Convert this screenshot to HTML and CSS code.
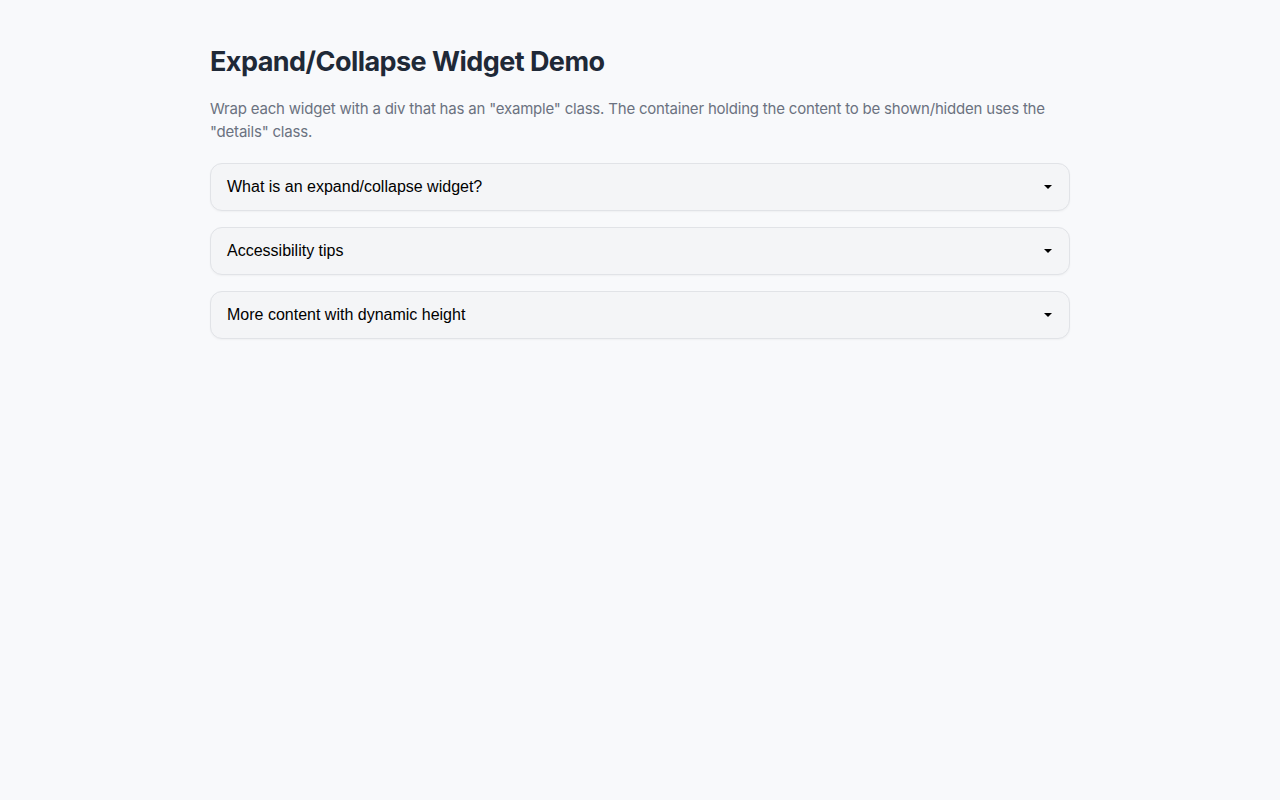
FILE: index.html
```html
<!DOCTYPE html>
<html lang="en">
<head>
  <meta charset="UTF-8" />
  <meta name="viewport" content="width=device-width, initial-scale=1.0"/>
  <title>Expand/Collapse Widget Demo</title>
  <link rel="stylesheet" href="styles.css">
</head>
<body>
  <main class="page">
    <h1>Expand/Collapse Widget Demo</h1>
    <p class="intro">Wrap each widget with a div that has an "example" class. The container holding the content to be shown/hidden uses the "details" class.</p>

    <div class="example">
      <button class="toggle" type="button">
        <span>What is an expand/collapse widget?</span>
        <span class="caret"></span>
      </button>
    </div>

    <div class="example">
      <button class="toggle" type="button">
        <span>Accessibility tips</span>
        <span class="caret"></span>
      </button>
    </div>

    <div class="example">
      <button class="toggle" type="button">
        <span>More content with dynamic height</span>
        <span class="caret"></span>
      </button>
    </div>
  </main>
</body>
</html>
```

FILE: styles.css
```css
body {
  font-family: Inter, "Noto Sans", sans-serif;
  background-color: #f8f9fb;
  margin: 0;
  padding: 0;
}

.page {
  max-width: 860px;
  margin: 0 auto;
  padding: 45px 0 40px;
}

h1 {
  color: #1f2937;
  font-size: 27px;
  font-weight: 700;
  letter-spacing: -0.55px;
  margin: 0 0 18px;
  line-height: 34px;
}

.intro {
  color: #6b7280;
  font-size: 15px;
  line-height: 23px;
  letter-spacing: -0.2px;
  margin: 0 0 20px;
}

.example {
  margin-bottom: 16px;
}

.toggle {
  display: flex;
  align-items: center;
  justify-content: space-between;
  width: 100%;
  height: 48px;
  padding: 0 17px 0 16px;
  background-color: #f4f5f7;
  border: 1px solid #e1e3e7;
  border-radius: 12px;
  box-shadow: 0 1px 2px rgba(0, 0, 0, 0.04);
  font-family: "Liberation Sans", Arial, sans-serif;
  font-size: 16px;
  color: #000;
  text-align: left;
  cursor: pointer;
}

.caret {
  width: 0;
  height: 0;
  border-left: 4px solid transparent;
  border-right: 4px solid transparent;
  border-top: 4px solid #000;
}
```
